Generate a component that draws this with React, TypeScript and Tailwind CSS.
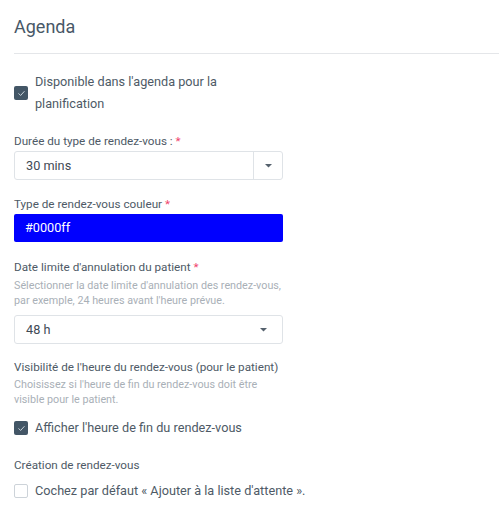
import { useState } from "react"

function Check({ checked, onToggle }: { checked: boolean; onToggle: () => void }) {
  return (
    <button
      type="button"
      onClick={onToggle}
      className={
        checked
          ? "w-[14px] h-[14px] shrink-0 rounded-[2px] bg-[#435666] flex items-center justify-center"
          : "w-[14px] h-[14px] shrink-0 rounded-[2px] border border-[#cdd3d9] bg-white"
      }
    >
      {checked && (
        <svg className="w-[9px] h-[9px]" viewBox="0 0 10 10" fill="none" stroke="#c9d3dc" strokeWidth={1.1}>
          <path d="M2 5.2l2 2 4-4.4" strokeLinecap="round" strokeLinejoin="round" />
        </svg>
      )}
    </button>
  )
}

function Caret() {
  return (
    <svg className="w-[7px] h-[4px]" viewBox="0 0 7 4" fill="#55616d">
      <path d="M0 0h7L3.5 3.5z" />
    </svg>
  )
}

export default function App() {
  const [available, setAvailable] = useState(true)
  const [showEnd, setShowEnd] = useState(true)
  const [waitList, setWaitList] = useState(false)

  return (
    <div className="w-[499px] h-[519px] bg-white text-[#4a5664] font-['Roboto',sans-serif] overflow-hidden">
      <div className="pl-[14px] pt-[15px]">
        <h2 className="text-[18px] leading-[24px] text-[#485867] font-normal">Agenda</h2>
        <div className="mt-[14px] h-px bg-[#e4e6e9]" />

        <div className="mt-[17px] flex items-center gap-[7px]">
          <Check checked={available} onToggle={() => setAvailable(!available)} />
          <p className="text-[12.7px] leading-[22px] w-[230px] text-[#4e5a66]">
            Disponible dans l'agenda pour la planification
          </p>
        </div>

        <div className="mt-[18px] w-[269px]">
          <label className="block text-[11.7px] leading-[16px] text-[#4e5a66]">
            Durée du type de rendez-vous : <span className="text-[#f0446c]">*</span>
          </label>
          <div className="mt-[2px] h-[29px] flex border border-[#dfe3e7] rounded-[3px]">
            <div className="flex-1 pl-[11px] flex items-center text-[12.7px] text-[#3f4a55]">30 mins</div>
            <div className="w-[29px] border-l border-[#dfe3e7] flex items-center justify-center">
              <Caret />
            </div>
          </div>
        </div>

        <div className="mt-[16px] w-[269px]">
          <label className="block text-[11.7px] leading-[16px] text-[#4e5a66]">
            Type de rendez-vous couleur <span className="text-[#f0446c]">*</span>
          </label>
          <div className="mt-[2px] h-[28px] bg-[#0000ff] rounded-[2px] pl-[11px] flex items-center text-[12.7px] text-white">
            #0000ff
          </div>
        </div>

        <div className="mt-[17px] w-[269px]">
          <label className="block text-[11.7px] leading-[16px] text-[#4e5a66]">
            Date limite d'annulation du patient <span className="text-[#f0446c]">*</span>
          </label>
          <p className="mt-[3px] text-[10.75px] leading-[15px] text-[#a9b0b7]">
            Sélectionner la date limite d'annulation des rendez-vous, par exemple, 24 heures avant l'heure prévue.
          </p>
          <div className="mt-[7px] h-[29px] flex items-center justify-between border border-[#dfe3e7] rounded-[3px] pl-[11px] pr-[15px]">
            <span className="text-[12.7px] text-[#3f4a55]">48 h</span>
            <Caret />
          </div>
        </div>

        <div className="mt-[15px] w-[269px]">
          <label className="block text-[11.7px] leading-[16px] text-[#4e5a66] whitespace-nowrap">
            Visibilité de l'heure du rendez-vous (pour le patient)
          </label>
          <p className="mt-[2px] w-[255px] text-[10.75px] leading-[15px] text-[#a9b0b7]">
            Choisissez si l'heure de fin du rendez-vous doit être visible pour le patient.
          </p>
        </div>

        <div className="mt-[10px] flex items-center gap-[7px]">
          <Check checked={showEnd} onToggle={() => setShowEnd(!showEnd)} />
          <span className="text-[12.7px] leading-[22px] text-[#4e5a66]">Afficher l'heure de fin du rendez-vous</span>
        </div>

        <div className="mt-[18px]">
          <label className="block text-[11.7px] leading-[16px] text-[#4e5a66]">Création de rendez-vous</label>
        </div>

        <div className="mt-[7px] flex items-center gap-[7px]">
          <Check checked={waitList} onToggle={() => setWaitList(!waitList)} />
          <span className="text-[12.7px] leading-[22px] text-[#4e5a66]">
            Cochez par défaut « Ajouter à la liste d'attente ».
          </span>
        </div>
      </div>
    </div>
  )
}
